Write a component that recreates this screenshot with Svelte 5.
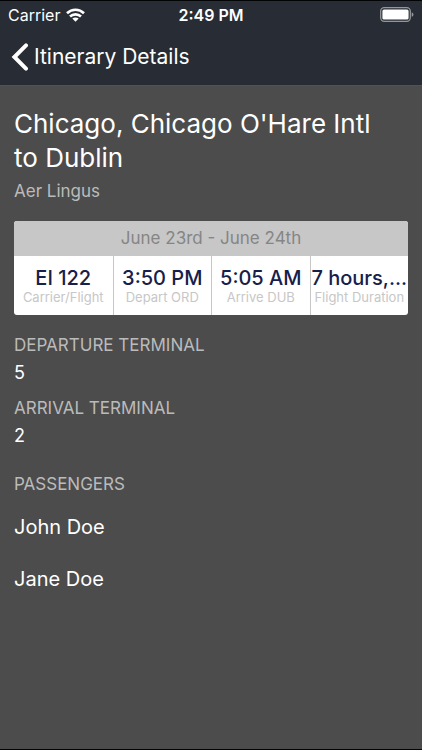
<script>
  const trip = {
    title: "Chicago, Chicago O'Hare Intl to Dublin",
    airline: 'Aer Lingus',
    dates: 'June 23rd - June 24th',
    facts: [
      { value: 'EI 122', label: 'Carrier/Flight' },
      { value: '3:50 PM', label: 'Depart ORD' },
      { value: '5:05 AM', label: 'Arrive DUB' },
      { value: '7 hours,...', label: 'Flight Duration' }
    ],
    terminals: [
      { label: 'Departure Terminal', value: '5' },
      { label: 'Arrival Terminal', value: '2' }
    ],
    passengers: ['John Doe', 'Jane Doe']
  };
</script>

<div class="screen">
  <header>
    <div class="status">
      <span class="carrier">
        Carrier
        <svg width="19" height="14" viewBox="0 0 19 14" aria-hidden="true">
          <g fill="none" stroke="#fff" stroke-width="2.6">
            <path d="M1 5.200C5.800 .6 13.200 .6 18 5.200" />
            <path d="M4 8.500C7 5.600 12 5.600 15 8.500" />
          </g>
          <path d="M6.300 10.600C8.100 9 10.900 9 12.700 10.600L9.500 13.800Z" fill="#fff" />
        </svg>
      </span>
      <span class="time">2:49 PM</span>
      <span class="power">
        <svg width="34" height="15" viewBox="0 0 34 15" aria-hidden="true">
          <rect x=".7" y=".7" width="29.600" height="13.600" rx="3.500" fill="none" stroke="#93969a" stroke-width="1.300" />
          <rect x="2.400" y="2.400" width="26.200" height="10.200" rx="1.600" fill="#fff" />
          <path d="M31.700 5.200C34 6 34 9 31.700 9.800Z" fill="#93969a" />
        </svg>
      </span>
    </div>
    <nav>
      <button type="button" class="back">
        <svg width="18" height="28" viewBox="0 0 18 28" aria-hidden="true">
          <path d="M15 2.400L3.400 14L15 25.600" fill="none" stroke="#fff" stroke-width="4" stroke-linecap="round" stroke-linejoin="miter" />
        </svg>
        <span>Itinerary Details</span>
      </button>
    </nav>
  </header>

  <main>
    <h1>{trip.title}</h1>
    <p class="airline">{trip.airline}</p>

    <section class="card">
      <h2>{trip.dates}</h2>
      <dl class="facts">
        {#each trip.facts as fact}
          <div>
            <dt>{fact.label}</dt>
            <dd>{fact.value}</dd>
          </div>
        {/each}
      </dl>
    </section>

    <dl class="terminals">
      {#each trip.terminals as terminal}
        <div>
          <dt>{terminal.label}</dt>
          <dd>{terminal.value}</dd>
        </div>
      {/each}
    </dl>

    <section class="passengers">
      <h2>Passengers</h2>
      <ul>
        {#each trip.passengers as name}
          <li>{name}</li>
        {/each}
      </ul>
    </section>
  </main>
</div>

<style>
  :global(body) {
    background: #4c4c4c;
  }

  .screen {
    box-sizing: border-box;
    min-height: 100vh;
    border-top: 1px solid #020305;
    border-bottom: 1px solid #020305;
    background: #4c4c4c;
    color: #fff;
    font-family: Inter, 'Liberation Sans', sans-serif;
  }

  h1, h2, p, dl, dd, ul {
    margin: 0;
    padding: 0;
    font-weight: 400;
  }

  header {
    background: #282c34;
    border-bottom: 1px solid #555152;
  }

  .status {
    display: grid;
    grid-template-columns: 1fr auto 1fr;
    align-items: center;
    height: 27px;
    padding: 0 8px;
    font-size: 16px;
  }

  .carrier {
    display: flex;
    align-items: center;
    gap: 6px;
  }

  .time {
    font-weight: 600;
  }

  .power {
    display: flex;
    justify-content: flex-end;
  }

  nav {
    display: flex;
    height: 57px;
    padding: 0 11px;
  }

  .back {
    display: flex;
    align-items: center;
    gap: 5px;
    border: 0;
    padding: 0;
    background: none;
    color: inherit;
    font: inherit;
    font-size: 21px;
    cursor: pointer;
  }

  main {
    padding: 21px 14px;
  }

  h1 {
    padding-right: 20px;
    font-size: 26px;
    line-height: 34px;
  }

  .airline {
    margin-top: 6px;
    color: #bbb;
    font-size: 17px;
    line-height: 20px;
  }

  .card {
    margin-top: 20px;
    border-radius: 3px;
    overflow: hidden;
    background: #fff;
    text-align: center;
  }

  .card h2 {
    background: #c7c7c7;
    color: #858585;
    font-size: 17px;
    line-height: 35px;
  }

  .facts {
    display: grid;
    grid-template-columns: repeat(4, minmax(0, 1fr));
  }

  .facts div {
    display: flex;
    flex-direction: column-reverse;
    padding: 10px 0 11px;
  }

  .facts div + div {
    border-left: 1px solid #c7c7c7;
  }

  .facts dt {
    color: #c7c7c7;
    font-size: 13px;
    line-height: 14px;
    white-space: nowrap;
  }

  .facts dd {
    overflow: hidden;
    color: #16204a;
    font-size: 20px;
    font-weight: 500;
    line-height: 24px;
    text-overflow: ellipsis;
    white-space: nowrap;
  }

  .terminals {
    display: grid;
    gap: 12px;
    margin-top: 20px;
  }

  .terminals dt,
  .passengers h2 {
    color: #bbb;
    font-size: 17px;
    line-height: 20px;
    text-transform: uppercase;
  }

  .terminals dd {
    margin-top: 4px;
    font-size: 18px;
    line-height: 27px;
  }

  .passengers {
    margin-top: 25px;
  }

  ul {
    display: grid;
    gap: 26px;
    margin-top: 20px;
    list-style: none;
  }

  li {
    font-size: 20px;
    line-height: 26px;
  }
</style>
